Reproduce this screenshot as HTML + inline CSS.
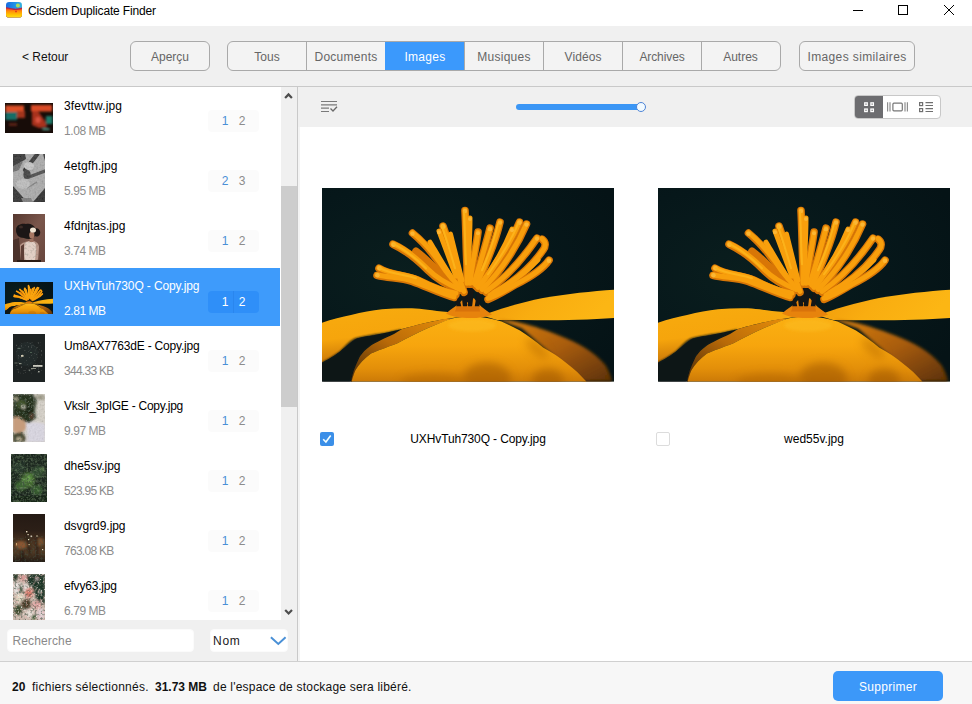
<!DOCTYPE html>
<html lang="fr">
<head>
<meta charset="utf-8">
<title>Cisdem Duplicate Finder</title>
<style>
*{box-sizing:border-box;margin:0;padding:0}
html,body{width:972px;height:704px;overflow:hidden;background:#fff}
body{font-family:"Liberation Sans",sans-serif;font-size:12px;color:#000;position:relative}
.abs{position:absolute}
/* title bar */
#title{left:0;top:0;width:972px;height:26px;background:#fff}
#title .t{left:28px;top:3px;font-size:12px;line-height:16px;color:#000;white-space:nowrap;letter-spacing:-0.15px}
/* toolbar */
#bar{left:0;top:26px;width:972px;height:61px;background:#f0f0f0;border-bottom:1px solid #c9c9c9}
.btn{position:absolute;top:15px;height:30px;border:1px solid #a9a9a9;border-radius:6px;background:#f3f3f3;color:#666;font-size:12px;line-height:30px;text-align:center;white-space:nowrap;overflow:hidden}
#tabs{position:absolute;left:227px;top:15px;width:554px;height:30px;border:1px solid #a9a9a9;border-radius:6px;background:#f3f3f3;overflow:hidden}
#tabs div{position:absolute;top:0;height:28px;line-height:30px;text-align:center;color:#666;font-size:12px;border-left:1px solid #a9a9a9}
#tabs div.first{border-left:none}
#tabs div.on{background:#3b99fc;color:#fff;border-left-color:#3b99fc}
/* left list */
#list{left:0;top:87px;width:281px;height:533px;background:#fff;overflow:hidden}
.row{position:absolute;left:0;width:280px;height:60px}
.row.sel{background:#3e9bfb;height:58px}
.row .n{position:absolute;left:64px;top:11px;font-size:12px;line-height:16px;white-space:nowrap;color:#000}
.row .s{position:absolute;left:64px;top:36px;font-size:12px;line-height:16px;white-space:nowrap;color:#8c8c8c}
.row.sel .n,.row.sel .s{color:#fff}
.row .s.m{letter-spacing:-0.43px}
.row .s.k{letter-spacing:-0.72px}
.bd{position:absolute;left:208px;top:23px;width:51px;height:22px;border-radius:4px;background:#fbfbfb}
.bd i{position:absolute;top:3px;width:12px;text-align:center;font-style:normal;font-size:12px;line-height:16px;color:#8c8c8c}
.bd i.a{left:11px;color:#4a8fd6}
.bd i.b{left:28px}
.row.sel .bd{background:#2f8ff8}
.row.sel .bd i{color:#fff}
.row.sel .bd:after{content:"";position:absolute;left:25px;top:0;width:1px;height:22px;background:#2a86ee}
.th{position:absolute;overflow:hidden}
#sb{left:281px;top:87px;width:16px;height:533px;background:#f0f0f0}
#sb .thumb{position:absolute;left:0;top:99px;width:16px;height:221px;background:#cdcdcd}
#vline{left:297px;top:87px;width:1px;height:575px;background:#c9c9c9}
/* left bottom */
#lb{left:0;top:620px;width:297px;height:42px;background:#f0f0f0}
#search{left:7px;top:629px;width:187px;height:23px;background:#fff;border:1px solid #fbfbfb;border-radius:4px;color:#8a8a8a;font-size:12px;line-height:22px;padding-left:4.500px;letter-spacing:0.13px}
#nom{left:209.500px;top:629px;width:78.500px;height:23px;background:#fff;border:1px solid #fbfbfb;border-radius:4px;color:#1a1a1a;font-size:12px;line-height:22px;padding-left:2.600px;letter-spacing:0.650px}
/* main */
#mtool{left:298px;top:87px;width:674px;height:40px;background:#f0f0f0}
#main{left:298px;top:127px;width:674px;height:535px;background:#fff}
.cap{position:absolute;top:431px;font-size:12px;line-height:16px;white-space:nowrap;color:#000;text-align:center}
/* bottom bar */
#foot{left:0;top:661px;width:972px;height:43px;background:#f7f7f7;border-top:1px solid #d0d0d0}
#foot .tx{position:absolute;left:0;top:17px;font-size:12px;line-height:16px;white-space:nowrap;color:#111}
#foot .tx b,#foot .tx span{position:absolute;top:0;white-space:nowrap}
#del{position:absolute;left:833px;top:9px;width:110px;height:30px;border-radius:5px;background:#3c98f9;color:#fff;font-size:12px;line-height:32.500px;text-align:center;letter-spacing:0.3px;overflow:hidden}
</style>
</head>
<body>
<svg class="abs" width="0" height="0" style="left:0;top:0"><defs>
<filter id="nzW" x="0" y="0" width="100%" height="100%"><feTurbulence type="fractalNoise" baseFrequency="0.600" numOctaves="2" seed="7"/><feColorMatrix type="matrix" values="0 0 0 0 0.92  0 0 0 0 0.90  0 0 0 0 0.84  5 0 0 0 -3.050"/></filter>
<filter id="nzK" x="0" y="0" width="100%" height="100%"><feTurbulence type="fractalNoise" baseFrequency="0.500" numOctaves="2" seed="11"/><feColorMatrix type="matrix" values="0 0 0 0 0.06  0 0 0 0 0.09  0 0 0 0 0.06  0 4 0 0 -1.900"/></filter>
<filter id="nzG" x="0" y="0" width="100%" height="100%"><feTurbulence type="fractalNoise" baseFrequency="0.450" numOctaves="3" seed="4"/><feColorMatrix type="matrix" values="0 0 0 0 0.36  0 0 0 0 0.55  0 0 0 0 0.27  0 0 4 0 -1.900"/></filter>
<filter id="nzL" x="0" y="0" width="100%" height="100%"><feTurbulence type="fractalNoise" baseFrequency="0.700" numOctaves="2" seed="21"/><feColorMatrix type="matrix" values="0 0 0 0 0.55  0 0 0 0 0.75  0 0 0 0 0.42  4 0 0 0 -2.500"/></filter>
<filter id="nzGr" x="0" y="0" width="100%" height="100%"><feTurbulence type="fractalNoise" baseFrequency="0.550" numOctaves="2" seed="5"/><feColorMatrix type="matrix" values="1.400 0 0 0 -0.200  1.400 0 0 0 -0.200  1.400 0 0 0 -0.200  0 0 0 0 0.420"/></filter>
<filter id="nzP" x="0" y="0" width="100%" height="100%"><feTurbulence type="fractalNoise" baseFrequency="0.400" numOctaves="2" seed="9"/><feColorMatrix type="matrix" values="0 0 0 0 0.90  0 0 0 0 0.52  0 0 0 0 0.50  0 4 0 0 -2.100"/></filter>
</defs></svg>
<!-- TITLE BAR -->
<div id="title" class="abs">
  <svg class="abs" style="left:6px;top:2px" width="16" height="16" viewBox="0 0 16 16">
    <defs>
      <linearGradient id="icb" x1="0" y1="0" x2="1" y2="0"><stop offset="0" stop-color="#1769e0"/><stop offset="0.600" stop-color="#2196e8"/><stop offset="1" stop-color="#3bb4dc"/></linearGradient>
      <linearGradient id="ico" x1="0" y1="0" x2="0" y2="1"><stop offset="0" stop-color="#f0452a"/><stop offset="0.250" stop-color="#ff8a0a"/><stop offset="0.650" stop-color="#ffc400"/><stop offset="1" stop-color="#ffe21a"/></linearGradient>
      <clipPath id="icc"><rect x="0" y="0" width="16" height="15.600" rx="3.200"/></clipPath>
    </defs>
    <g clip-path="url(#icc)">
      <rect x="0" y="0" width="16" height="16" fill="url(#icb)"/>
      <circle cx="11.900" cy="3.600" r="2" fill="#a9dc62"/>
      <path d="M0 5.200 C3 5.400 5 6.400 8 6.600 C11 6.800 13 6.200 16 5.600 L16 16 L0 16 Z" fill="#b5264a"/>
      <path d="M0 6.600 C3 6.600 5 7.800 8 8 C11 8.200 13 7.600 16 7 L16 16 L0 16 Z" fill="url(#ico)"/>
      <circle cx="10" cy="9.400" r="0.900" fill="#e0301c"/>
    </g>
  </svg>
  <div class="abs t">Cisdem Duplicate Finder</div>
  <svg class="abs" style="left:840px;top:0" width="132" height="26" viewBox="0 0 132 26">
    <path d="M13 10.5 H23" stroke="#000" stroke-width="1" fill="none"/>
    <rect x="58.500" y="5.500" width="9" height="9" stroke="#000" stroke-width="1" fill="none"/>
    <path d="M104 5 L114 15 M114 5 L104 15" stroke="#000" stroke-width="1" fill="none"/>
  </svg>
</div>

<!-- TOOLBAR -->
<div id="bar" class="abs">
  <div class="abs" style="left:22px;top:23px;font-size:12px;line-height:16px;color:#111;white-space:nowrap">&lt; Retour</div>
  <div class="btn" style="left:130px;width:80px"><span>Aperçu</span></div>
  <div id="tabs">
    <div class="first" style="left:0;width:78px"><span>Tous</span></div>
    <div style="left:78px;width:79px;letter-spacing:0.26px"><span>Documents</span></div>
    <div class="on" style="left:157px;width:79px;letter-spacing:0.27px"><span>Images</span></div>
    <div style="left:236px;width:79px;letter-spacing:0.24px"><span>Musiques</span></div>
    <div style="left:315px;width:79px;letter-spacing:0.08px"><span>Vidéos</span></div>
    <div style="left:394px;width:79px;letter-spacing:-0.1px"><span>Archives</span></div>
    <div style="left:473px;width:79px;padding-right:1px"><span>Autres</span></div>
  </div>
  <div class="btn" style="left:799px;width:116px;letter-spacing:0.38px"><span>Images similaires</span></div>
</div>

<!-- LEFT LIST -->
<div id="list" class="abs">
  <div class="row" style="top:0"><div class="n" style="letter-spacing:0.12px">3fevttw.jpg</div><div class="s m">1.08 MB</div><div class="bd"><i class="a">1</i><i class="b">2</i></div></div>
  <div class="row" style="top:60px"><div class="n" style="letter-spacing:0.09px">4etgfh.jpg</div><div class="s m">5.95 MB</div><div class="bd"><i class="a">2</i><i class="b">3</i></div></div>
  <div class="row" style="top:120px"><div class="n">4fdnjtas.jpg</div><div class="s m">3.74 MB</div><div class="bd"><i class="a">1</i><i class="b">2</i></div></div>
  <div class="row sel" style="top:181px"><div class="n" style="top:10px;letter-spacing:-0.12px">UXHvTuh730Q - Copy.jpg</div><div class="s m" style="top:35px">2.81 MB</div><div class="bd" style="top:23px"><i class="a">1</i><i class="b">2</i></div></div>
  <div class="row" style="top:240px"><div class="n" style="letter-spacing:-0.2px">Um8AX7763dE - Copy.jpg</div><div class="s k">344.33 KB</div><div class="bd"><i class="a">1</i><i class="b">2</i></div></div>
  <div class="row" style="top:300px"><div class="n" style="letter-spacing:-0.25px">Vkslr_3pIGE - Copy.jpg</div><div class="s m">9.97 MB</div><div class="bd"><i class="a">1</i><i class="b">2</i></div></div>
  <div class="row" style="top:360px"><div class="n" style="letter-spacing:-0.08px">dhe5sv.jpg</div><div class="s k">523.95 KB</div><div class="bd"><i class="a">1</i><i class="b">2</i></div></div>
  <div class="row" style="top:420px"><div class="n" style="letter-spacing:-0.05px">dsvgrd9.jpg</div><div class="s k">763.08 KB</div><div class="bd"><i class="a">1</i><i class="b">2</i></div></div>
  <div class="row" style="top:480px"><div class="n" style="letter-spacing:-0.2px">efvy63.jpg</div><div class="s m">6.79 MB</div><div class="bd"><i class="a">1</i><i class="b">2</i></div></div>

  <!-- thumbnails -->
  <svg class="abs" style="left:5px;top:16px" width="48" height="30" viewBox="0 0 48 30">
    <defs><filter id="t1b" x="-20%" y="-20%" width="140%" height="140%"><feGaussianBlur stdDeviation="0.800"/></filter></defs>
    <rect width="48" height="30" fill="#170c08"/>
    <g filter="url(#t1b)">
      <rect x="0.500" y="2.500" width="18.500" height="6.500" fill="#dc4f27"/>
      <rect x="12" y="8" width="8" height="7" fill="#a3341c"/>
      <rect x="26" y="2" width="21" height="6.500" fill="#d94b25"/>
      <rect x="0.500" y="9" width="11.500" height="8" fill="#146d66"/>
      <rect x="41" y="13" width="6.500" height="8" fill="#1b7a6a"/>
      <path d="M27 8 L33 8 L40 18 L42 24 L34 25 L27 22 Z" fill="#a8301f"/>
      <ellipse cx="33" cy="17" rx="2.600" ry="3" fill="#d9533f"/>
      <rect x="4" y="20" width="8" height="3" fill="#5a2414"/>
      <rect x="37.500" y="25.600" width="7" height="1.400" fill="#63c9b5"/>
    </g>
  </svg>
  <svg class="abs" style="left:13px;top:67px" width="32" height="48" viewBox="0 0 32 48">
    <defs><filter id="t2b" x="-20%" y="-20%" width="140%" height="140%"><feGaussianBlur stdDeviation="0.700"/></filter></defs>
    <rect width="32" height="48" fill="#a9a9a9"/>
    <g filter="url(#t2b)">
      <path d="M0 0 L12 0 L13 5 L0 13 Z" fill="#303030"/>
      <path d="M0 12 L10 7 L6 16 L0 18 Z" fill="#6a6a6a"/>
      <path d="M30 0 L32 0 L32 7 Z" fill="#3a3a3a"/>
      <path d="M24.500 0 L12 16" stroke="#343434" stroke-width="4.200" stroke-linecap="round"/>
      <path d="M32 17 L16 23" stroke="#484848" stroke-width="3.400" stroke-linecap="round"/>
      <ellipse cx="14" cy="20.500" rx="3.600" ry="4.500" fill="#3c3c3c"/>
      <path d="M0 32 L8 41 L14 48 L0 48 Z" fill="#2e2e2e"/>
      <path d="M32 34 L20 48 L32 48 Z" fill="#2c2c2c"/>
      <path d="M8 44 L18 44 L20 48 L10 48 Z" fill="#7a7a7a"/>
      <path d="M14 34 L24 28" stroke="#7d7d7d" stroke-width="1.200"/>
      <ellipse cx="16" cy="12" rx="5" ry="4" fill="#c4c4c4"/>
      <ellipse cx="10" cy="30" rx="7" ry="5" fill="#bcbcbc"/>
    </g>
    <rect width="32" height="48" filter="url(#nzGr)" opacity="0.300"/>
  </svg>
  <svg class="abs" style="left:13px;top:127px" width="32" height="48" viewBox="0 0 32 48">
    <defs><filter id="t3b" x="-20%" y="-20%" width="140%" height="140%"><feGaussianBlur stdDeviation="0.650"/></filter>
    <linearGradient id="t3g" x1="0" y1="0" x2="1" y2="1"><stop offset="0" stop-color="#563830"/><stop offset="0.500" stop-color="#7a564b"/><stop offset="1" stop-color="#68463d"/></linearGradient></defs>
    <rect width="32" height="48" fill="url(#t3g)"/>
    <g filter="url(#t3b)">
      <path d="M0 26 L6 24 L8 48 L0 48 Z" fill="#4c312a"/>
      <path d="M7 31 C10 28 14 27 17 27 L21 27 C24 28 26 30 26 33 L25 47 L8 47 Z" fill="#b9978a"/>
      <path d="M12 29 C15 27 19 27 22 29 C24 33 23 40 22 46 L12 46 C11 40 11 34 12 29 Z" fill="#e2cfc5"/>
      <path d="M8 32 L11 30 L11 46 L8 46 Z" fill="#5d3d34"/>
      <rect x="16.500" y="22" width="4" height="6" fill="#9b6f5e"/>
      <path d="M3 16 C3 11 8 9 13 10 C17 9 21 11 22 14 C26 14 28 17 27 20 C26 23 23 23 22 22 C20 25 15 26 11 24 C6 24 3 21 3 16 Z" fill="#1c1614"/>
      <ellipse cx="18.800" cy="21" rx="2.600" ry="3.600" fill="#a77764"/>
      <ellipse cx="20" cy="16" rx="3" ry="2.600" fill="#efe3d2"/>
      <ellipse cx="8" cy="13" rx="2" ry="1.500" fill="#3a2a25"/>
      <rect x="4" y="46" width="24" height="2" fill="#2a1c18"/>
    </g>
    <rect x="10" y="28" width="15" height="18" filter="url(#nzK)" opacity="0.180"/>
  </svg>
<svg class="abs" style="left:5px;top:195px" width="48" height="32" viewBox="0 0 292 193" preserveAspectRatio="none">
<defs>
<radialGradient id="bgt" cx="0.3" cy="0.45" r="0.8"><stop offset="0" stop-color="#0a1e1e"/><stop offset="0.6" stop-color="#06171a"/><stop offset="1" stop-color="#051316"/></radialGradient>
<linearGradient id="plt" x1="0" y1="0" x2="0.25" y2="1"><stop offset="0" stop-color="#f8ab0e"/><stop offset="0.55" stop-color="#f6a50c"/><stop offset="1" stop-color="#c67308"/></linearGradient>
<linearGradient id="prt" x1="0" y1="0" x2="1" y2="0.2"><stop offset="0" stop-color="#f09a0b"/><stop offset="0.5" stop-color="#f9ad10"/><stop offset="1" stop-color="#fcb614"/></linearGradient>
<linearGradient id="pft" x1="0" y1="0" x2="0" y2="1"><stop offset="0" stop-color="#fbb012"/><stop offset="0.45" stop-color="#f7a50d"/><stop offset="0.8" stop-color="#e38f09"/><stop offset="1" stop-color="#cc7a07"/></linearGradient>
<linearGradient id="pbt" x1="0" y1="0" x2="1" y2="1"><stop offset="0" stop-color="#d9800a"/><stop offset="0.5" stop-color="#a85c08"/><stop offset="1" stop-color="#5a3006"/></linearGradient>
<linearGradient id="pkt" x1="1" y1="0" x2="0" y2="1"><stop offset="0" stop-color="#e58d0a"/><stop offset="0.5" stop-color="#b96a08"/><stop offset="1" stop-color="#4a2a08"/></linearGradient>
<filter id="blt" x="-10%" y="-10%" width="120%" height="120%"><feGaussianBlur stdDeviation="1.6"/></filter>
<filter id="bwt" x="-10%" y="-10%" width="120%" height="120%"><feGaussianBlur stdDeviation="0.9"/></filter>
<filter id="bst" x="-10%" y="-10%" width="120%" height="120%"><feGaussianBlur stdDeviation="4"/></filter>
</defs>
<rect width="292" height="193" fill="url(#bgt)"/>
<!-- right top petal -->
<path d="M160 127 C175 121 200 114 221 109.700 C245 105.500 270 103 292 101.500 L292 129.500 C260 132 220 132 175 131.500 Z" fill="url(#prt)"/>
<!-- right back petal -->
<path d="M176 131 C190 132 206 135 236 146.500 C256 154 272 163 283 176 C287 182 289 188 290 193 L262 193 L200 140 Z" fill="url(#pbt)" filter="url(#blt)"/>
<!-- left petal -->
<path d="M0 134.400 C10 131 20 128.500 29 126.700 C40 124 50 122 60 121 C70 120 80 119.800 90 120 C100 120.500 110 122.500 126 123.600 L140 128 L121 131 C112 132.500 106 133.600 80 140.500 C70 143 60 145 50 147 C42 148 36 149 33 151 C26 156 20 161 18 163 C10 169 4 172 0 174 Z" fill="url(#plt)"/>
<!-- dark shadow wedge -->
<path d="M0 174 C6 171 12 167 18 163 C24 157 28 152 33.500 149.800 C42 147.500 52 146 60 145 C68 143.500 74 142 80 140.500 L72 145.500 C62 150 54 154 49 157 C42 162 38 167 36.500 171 C33 178 30 186 29 193 L0 193 Z" fill="#0f1713" filter="url(#bwt)"/>
<!-- back left strip -->
<path d="M80 140.500 C92 137 106 133.600 122 130.500 L130 130 C120 134 112 137 106 139.500 C94 145 84 150 75 155 C64 159 56 162 49 165 C42 170 37 176 33.500 181.500 L30 193 L29 193 C30 186 33 178 36.500 171 C38 167 42 162 49 157 C54 154 62 150 72 145.500 Z" fill="url(#pkt)"/>
<!-- front petal -->
<path d="M29.600 193 C31 188 32 185 33.500 181.500 C37 176 42 170 49 165 C56 162 64 159 75 155 C84 150 94 145 106 139.500 C114 136 122 132.500 130 130 C138 128.500 146 128 152 128.200 C160 128.500 170 130.500 179.500 133 C186 136 192 139 198 142 C206 147 214 153 221 159 C230 164 238 169 244.300 174.500 C252 180 259 187 264.400 193 Z" fill="url(#pft)"/>
<!-- folds on front petal -->
<g filter="url(#bst)" opacity="0.22">
<ellipse cx="165" cy="190" rx="24" ry="16" fill="#9a5205"/>
<ellipse cx="226" cy="192" rx="16" ry="12" fill="#9a5205"/>
<ellipse cx="112" cy="194" rx="34" ry="9" fill="#b06406"/>
<ellipse cx="215" cy="160" rx="6" ry="14" transform="rotate(-50 215 160)" fill="#b86a06"/>
</g>
<ellipse cx="150" cy="137" rx="24" ry="6" fill="#fcbd20" opacity="0.55" filter="url(#blt)"/>
<!-- stamen base -->
<path d="M124 125 C130 120 136 117 140 112 L152 110 C156 116 162 121 170 126 C160 131 134 131 124 125 Z" fill="#e7830c"/>
<path d="M132 98 L137 118 M141 100 L143 117 M150 100 L148 117 M158 100 L155 118 M146 96 L146 112" stroke="#141616" stroke-width="4.500" stroke-linecap="round" fill="none"/>
<path d="M135 118 L157 118 L158 123 L133 123 Z" fill="#d9730a"/>
<!-- stamens dark layer -->
<g fill="none" stroke="#d87606" stroke-width="10.500" stroke-linecap="round" stroke-linejoin="round">
<path d="M57 80 C70 88 84 86 96 92 C108 98 122 104 134 106"/>
<path d="M55 87 C66 90 78 89 90 93 C104 98 118 105 132 109"/>
<path d="M71 56 C84 62 96 72 106 82 C116 92 128 98 138 102"/>
<path d="M90.500 45 C104 56 116 72 124 84 C130 92 136 98 140 102"/>
<path d="M94 63 C106 72 116 84 126 92"/>
<path d="M121 38 C126 52 132 70 136 84 C138 92 140 98 142 104"/>
<path d="M143 22.500 C144 40 144 60 145 78 L145 96"/>
<path d="M156 44 C154 60 150 76 148 96"/>
<path d="M168 40 C164 56 158 76 152 96"/>
<path d="M178 34 C174 52 164 76 154 98"/>
<path d="M197.500 34 C190 52 174 78 156 100"/>
<path d="M204.500 36 C196 56 180 82 160 102"/>
<path d="M215 50 C204 66 186 88 164 104"/>
<path d="M220 51 C224 54 224 58 221 62 C210 78 192 94 168 108"/>
<path d="M227 72 C220 82 206 90 194 96 C184 102 174 108 166 111"/>
</g>
<!-- stamens bright layer -->
<g fill="none" stroke="#f9a30e" stroke-width="7.500" stroke-linecap="round" stroke-linejoin="round">
<path d="M57 79.500 C70 87 84 85 96 91 C108 97 122 103 134 105"/>
<path d="M55 86.500 C66 89.500 78 88.500 90 92.500 C104 97.500 118 104.500 132 108.500"/>
<path d="M71 55.500 C84 61 96 71 106 81 C116 91 128 97 138 101"/>
<path d="M90.500 44.500 C104 55 116 71 124 83 C130 91 136 97 140 101"/>
<path d="M108 54 C114 64 122 78 130 90"/>
<path d="M117 43 C122 56 128 72 134 88"/>
<path d="M121 37.500 C126 52 132 70 136 84 C138 92 140 98 142 103"/>
<path d="M128.500 46 C132 60 136 76 140 92"/>
<path d="M143 22 C144 40 144 60 145 78 L145 95"/>
<path d="M148 30 C148 46 147 64 146 84"/>
<path d="M156 44 C154 60 150 76 148 95"/>
<path d="M168 40 C164 56 158 76 152 95"/>
<path d="M178 33.500 C174 52 164 76 154 97"/>
<path d="M190 41 C184 56 172 78 158 98"/>
<path d="M197.500 33.500 C190 52 174 78 156 99"/>
<path d="M204.500 35.500 C196 56 180 82 160 101"/>
<path d="M215 49.500 C204 66 186 88 164 103"/>
<path d="M220 50.500 C224 54 224 58 221 62 C210 78 192 94 168 107"/>
<path d="M216 71.500 C206 82 190 94 172 104"/>
<path d="M227 71.500 C220 82 206 90 194 96 C184 102 174 108 166 110"/>
</g>
<!-- tips -->
<g fill="#fbb634">
<circle cx="143" cy="23" r="2.200"/><circle cx="148" cy="31" r="2"/><circle cx="121" cy="38.500" r="2.500"/><circle cx="117" cy="44" r="2"/><circle cx="90.500" cy="45.500" r="2.200"/><circle cx="71.500" cy="56.500" r="2.300"/><circle cx="57.500" cy="80" r="2.300"/><circle cx="55.500" cy="87" r="2.200"/><circle cx="168" cy="41" r="2.200"/><circle cx="178" cy="34.500" r="2.200"/><circle cx="197.500" cy="34.500" r="2.300"/><circle cx="204.500" cy="36.500" r="2.200"/><circle cx="215" cy="50.500" r="2.100"/><circle cx="227" cy="72.500" r="2.300"/><circle cx="156" cy="45" r="2"/><circle cx="190" cy="42" r="2"/>
</g>
<!-- highlights -->
<g fill="none" stroke="#fdb51c" stroke-width="2" stroke-linecap="round" opacity="0.9">
<path d="M120 38 C124 50 129 66 133 80"/>
<path d="M142 24 C143 40 143 58 144 76"/>
<path d="M196 36 C190 50 178 70 166 86"/>
<path d="M176 36 C172 52 166 68 160 82"/>
<path d="M72 56 C84 62 94 70 104 80"/>
<path d="M58 80 C70 86 82 86 94 90"/>
</g>
</svg>

  <svg class="abs" style="left:13px;top:247px" width="32" height="48" viewBox="0 0 32 48">
    <defs><filter id="t5b" x="-20%" y="-20%" width="140%" height="140%"><feGaussianBlur stdDeviation="0.500"/></filter></defs>
    <rect width="32" height="48" fill="#1e2323"/>
    <g filter="url(#t5b)">
      <ellipse cx="14" cy="20" rx="11" ry="12" fill="#242c2b"/>
      <rect x="20" y="31" width="9.500" height="1.800" fill="#c9c9bd"/>
      <rect x="18" y="34" width="5" height="1" fill="#8d9084"/>
      <rect x="8" y="21" width="2.500" height="1.800" fill="#d0c9b2"/>
      <rect x="6" y="29" width="2.500" height="1.200" fill="#8e9288"/>
      <rect x="1.500" y="28.500" width="3" height="1" fill="#60675f"/>
      <rect x="4.500" y="14" width="3" height="1" fill="#5b6a60"/>
      <rect x="17" y="18" width="2" height="1" fill="#4d6052"/>
      <rect x="25" y="37" width="1.600" height="1.400" fill="#a2a59b"/>
      <rect x="16" y="35.500" width="1.200" height="1.600" fill="#6d756c"/>
    </g>
    <rect x="3" y="8" width="26" height="32" filter="url(#nzW)" opacity="0.220"/>
  </svg>
  <svg class="abs" style="left:13px;top:307px" width="32" height="48" viewBox="0 0 32 48">
    <defs><filter id="t6b" x="-20%" y="-20%" width="140%" height="140%"><feGaussianBlur stdDeviation="0.900"/></filter></defs>
    <rect width="32" height="48" fill="#d4cfc6"/>
    <g filter="url(#t6b)">
      <path d="M0 0 L20 0 L24 6 L22 16 L23 24 L16 29 L8 26 L0 24 Z" fill="#27331d"/>
      <ellipse cx="8" cy="10" rx="5" ry="4" fill="#42542f"/>
      <ellipse cx="16" cy="16" rx="4" ry="5" fill="#1d2717"/>
      <ellipse cx="3" cy="5" rx="2.200" ry="2.200" fill="#a9a48b"/>
      <ellipse cx="10.500" cy="13" rx="1.800" ry="1.800" fill="#e2decd"/>
      <path d="M20 2 L30 0 L32 6 L26 6 Z" fill="#9d9a86"/>
      <path d="M0 24 C4 21 10 24 13 30 C14 34 12 38 6 39 L0 38 Z" fill="#c69c7c"/>
      <path d="M13 30 C18 28 26 28 32 30 L32 48 L14 48 C15 42 14 36 13 30 Z" fill="#d9d6e1"/>
      <path d="M0 40 L9 38 L13 44 L11 48 L0 48 Z" fill="#4c4a33"/>
      <ellipse cx="6" cy="45" rx="3" ry="2" fill="#b7ae93"/>
      <ellipse cx="18.500" cy="22" rx="2" ry="3" fill="#5b3d2e"/>
    </g>
    <clipPath id="t6c"><path d="M0 0 L20 0 L24 6 L22 16 L23 24 L16 29 L8 26 L0 24 Z"/></clipPath>
    <g clip-path="url(#t6c)"><rect width="32" height="30" filter="url(#nzK)" opacity="0.900"/><rect width="32" height="30" filter="url(#nzW)" opacity="0.380"/></g>
    <rect x="20" y="0" width="12" height="28" filter="url(#nzGr)" opacity="0.350"/>
    <rect x="0" y="38" width="12" height="10" filter="url(#nzK)" opacity="0.500"/>
    <rect x="13" y="30" width="19" height="18" filter="url(#nzGr)" opacity="0.220"/>
  </svg>
  <svg class="abs" style="left:11px;top:367px" width="36" height="48" viewBox="0 0 36 48">
    <defs><filter id="t7b" x="-20%" y="-20%" width="140%" height="140%"><feGaussianBlur stdDeviation="1.100"/></filter></defs>
    <rect width="36" height="48" fill="#1b261e"/>
    <g filter="url(#t7b)">
      <ellipse cx="17" cy="26" rx="7" ry="8" fill="#42692f"/>
      <ellipse cx="10" cy="32" rx="6" ry="5" fill="#3d6530"/>
      <ellipse cx="27" cy="18" rx="6" ry="6" fill="#2f4a2d"/>
      <ellipse cx="26" cy="36" rx="6" ry="5" fill="#355a2f"/>
      <ellipse cx="8" cy="14" rx="6" ry="6" fill="#253829"/>
      <ellipse cx="18" cy="24" rx="2.400" ry="3.400" fill="#649a4a"/>
      <ellipse cx="32" cy="15" rx="1.500" ry="1.500" fill="#7aa064"/>
      <ellipse cx="13" cy="26" rx="1.600" ry="1.600" fill="#6a9a52"/>
      <rect x="0" y="42" width="36" height="6" fill="#162019"/>
    </g>
    <rect width="36" height="48" filter="url(#nzG)" opacity="0.320"/>
    <rect width="36" height="48" filter="url(#nzK)" opacity="0.700"/>
    <rect x="8" y="14" width="22" height="26" filter="url(#nzL)" opacity="0.300"/>
  </svg>
  <svg class="abs" style="left:13px;top:427px" width="32" height="48" viewBox="0 0 32 48">
    <defs><filter id="t8b" x="-20%" y="-20%" width="140%" height="140%"><feGaussianBlur stdDeviation="1"/></filter>
    <linearGradient id="t8g" x1="0" y1="0" x2="0" y2="1"><stop offset="0" stop-color="#241a14"/><stop offset="0.350" stop-color="#2c1f17"/><stop offset="0.600" stop-color="#4a3320"/><stop offset="0.800" stop-color="#4f3924"/><stop offset="1" stop-color="#241c15"/></linearGradient></defs>
    <rect width="32" height="48" fill="url(#t8g)"/>
    <g filter="url(#t8b)">
      <ellipse cx="8" cy="31" rx="6" ry="4" fill="#8a5632"/>
      <ellipse cx="27" cy="28" rx="4" ry="4" fill="#7a4f2f"/>
      <path d="M13 17 L17 40" stroke="#2c2017" stroke-width="2"/>
      <path d="M24 22 L24 44" stroke="#2d2219" stroke-width="2"/>
      <path d="M9 36 L10 48" stroke="#241a14" stroke-width="2.400"/>
    </g>
    <rect x="0" y="22" width="32" height="26" filter="url(#nzK)" opacity="0.450"/>
    <g fill="#e9dcc0"><rect x="13" y="17" width="1.400" height="1.400"/><rect x="14.500" y="20" width="1.200" height="1.200"/><rect x="17.500" y="21.500" width="1.600" height="1.600" fill="#c9bfae"/><rect x="15" y="25" width="1.200" height="1.200"/><rect x="15.500" y="30" width="1.200" height="1.200" fill="#d8c39a"/><rect x="29" y="35" width="1.200" height="1.200"/><rect x="3" y="29" width="1" height="2.400" fill="#c9a56e"/><rect x="23.500" y="21" width="1" height="2" fill="#b5a58a"/></g>
  </svg>
  <svg class="abs" style="left:13px;top:487px" width="32" height="48" viewBox="0 0 32 48">
    <defs><filter id="t9b" x="-20%" y="-20%" width="140%" height="140%"><feGaussianBlur stdDeviation="0.900"/></filter></defs>
    <rect width="32" height="48" fill="#c9b7ab"/>
    <g filter="url(#t9b)">
      <path d="M14 0 L32 0 L32 30 L24 26 L20 14 L14 8 Z" fill="#1d3426"/>
      <path d="M0 0 L6 0 L4 6 L0 8 Z" fill="#2a3a29"/>
      <ellipse cx="4" cy="14" rx="4.500" ry="6" fill="#e5dedb"/>
      <ellipse cx="10" cy="4" rx="3.500" ry="3" fill="#dc9a97"/>
      <ellipse cx="12" cy="13" rx="3" ry="3" fill="#e9e1de"/>
      <ellipse cx="16" cy="19" rx="4" ry="5" fill="#d77e70"/>
      <ellipse cx="8" cy="15" rx="1.800" ry="4" fill="#2f4a2a"/>
      <ellipse cx="7" cy="24" rx="4" ry="4" fill="#e6dcc6"/>
      <ellipse cx="13" cy="30" rx="5" ry="5" fill="#4a3a25"/>
      <ellipse cx="24" cy="31" rx="5" ry="4" fill="#dba29f"/>
      <ellipse cx="5" cy="36" rx="4" ry="5" fill="#3a4a2b"/>
      <ellipse cx="28" cy="40" rx="4" ry="6" fill="#e3cfd3"/>
      <ellipse cx="17" cy="40" rx="4" ry="4" fill="#e8e0d8"/>
      <ellipse cx="21" cy="43" rx="2.500" ry="2.500" fill="#3b5a2e"/>
      <ellipse cx="24" cy="5" rx="1.500" ry="1.500" fill="#d7c5c5"/>
      <ellipse cx="27" cy="18" rx="1.200" ry="1.200" fill="#c3d0c3"/>
    </g>
    <rect width="32" height="48" filter="url(#nzP)" opacity="0.550"/>
    <rect width="32" height="48" filter="url(#nzK)" opacity="0.600"/>
    <rect width="32" height="48" filter="url(#nzW)" opacity="0.800"/>
  </svg>
</div>
<div id="sb" class="abs">
  <div class="thumb"></div>
  <svg class="abs" style="left:0;top:0" width="16" height="533" viewBox="0 0 16 533">
    <path d="M4.100 11 L7.500 7.400 L10.900 11" stroke="#4d4d4d" stroke-width="2.200" fill="none"/>
    <path d="M4.200 523 L7.600 526.500 L11 523" stroke="#4d4d4d" stroke-width="2.200" fill="none"/>
  </svg>
</div>
<div id="lb" class="abs"></div>
<div id="search" class="abs">Recherche</div>
<div id="nom" class="abs">Nom
  <svg class="abs" style="left:59px;top:6px" width="18" height="12" viewBox="0 0 18 12"><path d="M0.900 1.300 L8.300 7.900 L15.600 1.300" stroke="#4a90d6" stroke-width="2" fill="none"/></svg>
</div>
<div id="vline" class="abs"></div>

<!-- MAIN -->
<div id="mtool" class="abs"></div>
<div id="main" class="abs"></div>
<div class="abs" style="left:298px;top:127px;width:2px;height:534px;background:#f4f4f4"></div>
<!-- select-all icon -->
<svg class="abs" style="left:320px;top:100px" width="18" height="13" viewBox="0 0 18 13">
  <path d="M1 1.500 H17 M1 4.800 H17 M1 8.200 H9 M1 11.500 H9" stroke="#7a7a7a" stroke-width="1.200" fill="none"/>
  <path d="M10.500 8.500 L13 11 L17 6.800" stroke="#6a6a6a" stroke-width="1.300" fill="none"/>
</svg>
<!-- slider -->
<div class="abs" style="left:516px;top:103.500px;width:124px;height:6.500px;border-radius:3.250px;background:#3b96f5"></div>
<div class="abs" style="left:636.300px;top:102.200px;width:9.600px;height:9.600px;border-radius:5px;background:#f2faff;border:1.500px solid #4d84d6"></div>
<!-- view toggle -->
<div class="abs" style="left:854px;top:95px;width:87px;height:24px;border:1px solid #c8c8c8;border-radius:4px;background:#fff;overflow:hidden">
  <div class="abs" style="left:-1px;top:-1px;width:29px;height:24px;background:#6d6d70"></div>
  <svg class="abs" style="left:-1px;top:-1px" width="87" height="24" viewBox="0 0 87 24">
    <g fill="none" stroke="#fff" stroke-width="1.300"><rect x="10.750" y="7.850" width="2.500" height="2.500"/><rect x="16.900" y="7.850" width="2.500" height="2.500"/><rect x="10.750" y="14.050" width="2.500" height="2.500"/><rect x="16.900" y="14.050" width="2.500" height="2.500"/></g>
    <g fill="none" stroke="#8e8e8e" stroke-width="1.200"><path d="M33.600 7.300 V16.600 M36 7.300 V16.600 M51 7.300 V16.600 M53.400 7.300 V16.600"/><rect x="38.900" y="8.200" width="9.400" height="7.600" rx="1" stroke="#777"/></g>
    <g fill="none" stroke="#6f6f6f" stroke-width="1.200"><rect x="65.600" y="7.600" width="3" height="3"/><rect x="65.600" y="13.600" width="3" height="3"/><path d="M71.500 7.600 H79 M71.500 10.500 H79 M71.500 13.600 H79 M71.500 16.500 H79"/></g>
  </svg>
</div>
<!-- big images -->
<svg class="abs" style="left:322px;top:188px" width="292" height="193.6" viewBox="0 0 292 193" preserveAspectRatio="none">
<defs>
<radialGradient id="bga" cx="0.3" cy="0.45" r="0.8"><stop offset="0" stop-color="#0a1e1e"/><stop offset="0.6" stop-color="#06171a"/><stop offset="1" stop-color="#051316"/></radialGradient>
<linearGradient id="pla" x1="0" y1="0" x2="0.25" y2="1"><stop offset="0" stop-color="#f8ab0e"/><stop offset="0.55" stop-color="#f6a50c"/><stop offset="1" stop-color="#c67308"/></linearGradient>
<linearGradient id="pra" x1="0" y1="0" x2="1" y2="0.2"><stop offset="0" stop-color="#f09a0b"/><stop offset="0.5" stop-color="#f9ad10"/><stop offset="1" stop-color="#fcb614"/></linearGradient>
<linearGradient id="pfa" x1="0" y1="0" x2="0" y2="1"><stop offset="0" stop-color="#fbb012"/><stop offset="0.45" stop-color="#f7a50d"/><stop offset="0.8" stop-color="#e38f09"/><stop offset="1" stop-color="#cc7a07"/></linearGradient>
<linearGradient id="pba" x1="0" y1="0" x2="1" y2="1"><stop offset="0" stop-color="#d9800a"/><stop offset="0.5" stop-color="#a85c08"/><stop offset="1" stop-color="#5a3006"/></linearGradient>
<linearGradient id="pka" x1="1" y1="0" x2="0" y2="1"><stop offset="0" stop-color="#e58d0a"/><stop offset="0.5" stop-color="#b96a08"/><stop offset="1" stop-color="#4a2a08"/></linearGradient>
<filter id="bla" x="-10%" y="-10%" width="120%" height="120%"><feGaussianBlur stdDeviation="1.6"/></filter>
<filter id="bwa" x="-10%" y="-10%" width="120%" height="120%"><feGaussianBlur stdDeviation="0.9"/></filter>
<filter id="bsa" x="-10%" y="-10%" width="120%" height="120%"><feGaussianBlur stdDeviation="4"/></filter>
</defs>
<rect width="292" height="193" fill="url(#bga)"/>
<!-- right top petal -->
<path d="M160 127 C175 121 200 114 221 109.700 C245 105.500 270 103 292 101.500 L292 129.500 C260 132 220 132 175 131.500 Z" fill="url(#pra)"/>
<!-- right back petal -->
<path d="M176 131 C190 132 206 135 236 146.500 C256 154 272 163 283 176 C287 182 289 188 290 193 L262 193 L200 140 Z" fill="url(#pba)" filter="url(#bla)"/>
<!-- left petal -->
<path d="M0 134.400 C10 131 20 128.500 29 126.700 C40 124 50 122 60 121 C70 120 80 119.800 90 120 C100 120.500 110 122.500 126 123.600 L140 128 L121 131 C112 132.500 106 133.600 80 140.500 C70 143 60 145 50 147 C42 148 36 149 33 151 C26 156 20 161 18 163 C10 169 4 172 0 174 Z" fill="url(#pla)"/>
<!-- dark shadow wedge -->
<path d="M0 174 C6 171 12 167 18 163 C24 157 28 152 33.500 149.800 C42 147.500 52 146 60 145 C68 143.500 74 142 80 140.500 L72 145.500 C62 150 54 154 49 157 C42 162 38 167 36.500 171 C33 178 30 186 29 193 L0 193 Z" fill="#0f1713" filter="url(#bwa)"/>
<!-- back left strip -->
<path d="M80 140.500 C92 137 106 133.600 122 130.500 L130 130 C120 134 112 137 106 139.500 C94 145 84 150 75 155 C64 159 56 162 49 165 C42 170 37 176 33.500 181.500 L30 193 L29 193 C30 186 33 178 36.500 171 C38 167 42 162 49 157 C54 154 62 150 72 145.500 Z" fill="url(#pka)"/>
<!-- front petal -->
<path d="M29.600 193 C31 188 32 185 33.500 181.500 C37 176 42 170 49 165 C56 162 64 159 75 155 C84 150 94 145 106 139.500 C114 136 122 132.500 130 130 C138 128.500 146 128 152 128.200 C160 128.500 170 130.500 179.500 133 C186 136 192 139 198 142 C206 147 214 153 221 159 C230 164 238 169 244.300 174.500 C252 180 259 187 264.400 193 Z" fill="url(#pfa)"/>
<!-- folds on front petal -->
<g filter="url(#bsa)" opacity="0.5">
<ellipse cx="165" cy="190" rx="24" ry="16" fill="#9a5205"/>
<ellipse cx="226" cy="192" rx="16" ry="12" fill="#9a5205"/>
<ellipse cx="112" cy="194" rx="34" ry="9" fill="#b06406"/>
<ellipse cx="215" cy="160" rx="6" ry="14" transform="rotate(-50 215 160)" fill="#b86a06"/>
</g>
<ellipse cx="150" cy="137" rx="24" ry="6" fill="#fcbd20" opacity="0.55" filter="url(#bla)"/>
<!-- stamen base -->
<path d="M124 125 C130 120 136 117 140 112 L152 110 C156 116 162 121 170 126 C160 131 134 131 124 125 Z" fill="#e7830c"/>
<path d="M132 98 L137 118 M141 100 L143 117 M150 100 L148 117 M158 100 L155 118 M146 96 L146 112" stroke="#141616" stroke-width="4.500" stroke-linecap="round" fill="none"/>
<path d="M135 118 L157 118 L158 123 L133 123 Z" fill="#d9730a"/>
<!-- stamens dark layer -->
<g fill="none" stroke="#d87606" stroke-width="7.600" stroke-linecap="round" stroke-linejoin="round">
<path d="M57 80 C70 88 84 86 96 92 C108 98 122 104 134 106"/>
<path d="M55 87 C66 90 78 89 90 93 C104 98 118 105 132 109"/>
<path d="M71 56 C84 62 96 72 106 82 C116 92 128 98 138 102"/>
<path d="M90.500 45 C104 56 116 72 124 84 C130 92 136 98 140 102"/>
<path d="M94 63 C106 72 116 84 126 92"/>
<path d="M121 38 C126 52 132 70 136 84 C138 92 140 98 142 104"/>
<path d="M143 22.500 C144 40 144 60 145 78 L145 96"/>
<path d="M156 44 C154 60 150 76 148 96"/>
<path d="M168 40 C164 56 158 76 152 96"/>
<path d="M178 34 C174 52 164 76 154 98"/>
<path d="M197.500 34 C190 52 174 78 156 100"/>
<path d="M204.500 36 C196 56 180 82 160 102"/>
<path d="M215 50 C204 66 186 88 164 104"/>
<path d="M220 51 C224 54 224 58 221 62 C210 78 192 94 168 108"/>
<path d="M227 72 C220 82 206 90 194 96 C184 102 174 108 166 111"/>
</g>
<!-- stamens bright layer -->
<g fill="none" stroke="#f89f0c" stroke-width="5" stroke-linecap="round" stroke-linejoin="round">
<path d="M57 79.500 C70 87 84 85 96 91 C108 97 122 103 134 105"/>
<path d="M55 86.500 C66 89.500 78 88.500 90 92.500 C104 97.500 118 104.500 132 108.500"/>
<path d="M71 55.500 C84 61 96 71 106 81 C116 91 128 97 138 101"/>
<path d="M90.500 44.500 C104 55 116 71 124 83 C130 91 136 97 140 101"/>
<path d="M108 54 C114 64 122 78 130 90"/>
<path d="M117 43 C122 56 128 72 134 88"/>
<path d="M121 37.500 C126 52 132 70 136 84 C138 92 140 98 142 103"/>
<path d="M128.500 46 C132 60 136 76 140 92"/>
<path d="M143 22 C144 40 144 60 145 78 L145 95"/>
<path d="M148 30 C148 46 147 64 146 84"/>
<path d="M156 44 C154 60 150 76 148 95"/>
<path d="M168 40 C164 56 158 76 152 95"/>
<path d="M178 33.500 C174 52 164 76 154 97"/>
<path d="M190 41 C184 56 172 78 158 98"/>
<path d="M197.500 33.500 C190 52 174 78 156 99"/>
<path d="M204.500 35.500 C196 56 180 82 160 101"/>
<path d="M215 49.500 C204 66 186 88 164 103"/>
<path d="M220 50.500 C224 54 224 58 221 62 C210 78 192 94 168 107"/>
<path d="M216 71.500 C206 82 190 94 172 104"/>
<path d="M227 71.500 C220 82 206 90 194 96 C184 102 174 108 166 110"/>
</g>
<!-- tips -->
<g fill="#fbb634">
<circle cx="143" cy="23" r="2.200"/><circle cx="148" cy="31" r="2"/><circle cx="121" cy="38.500" r="2.500"/><circle cx="117" cy="44" r="2"/><circle cx="90.500" cy="45.500" r="2.200"/><circle cx="71.500" cy="56.500" r="2.300"/><circle cx="57.500" cy="80" r="2.300"/><circle cx="55.500" cy="87" r="2.200"/><circle cx="168" cy="41" r="2.200"/><circle cx="178" cy="34.500" r="2.200"/><circle cx="197.500" cy="34.500" r="2.300"/><circle cx="204.500" cy="36.500" r="2.200"/><circle cx="215" cy="50.500" r="2.100"/><circle cx="227" cy="72.500" r="2.300"/><circle cx="156" cy="45" r="2"/><circle cx="190" cy="42" r="2"/>
</g>
<!-- highlights -->
<g fill="none" stroke="#fdb51c" stroke-width="2" stroke-linecap="round" opacity="0.9">
<path d="M120 38 C124 50 129 66 133 80"/>
<path d="M142 24 C143 40 143 58 144 76"/>
<path d="M196 36 C190 50 178 70 166 86"/>
<path d="M176 36 C172 52 166 68 160 82"/>
<path d="M72 56 C84 62 94 70 104 80"/>
<path d="M58 80 C70 86 82 86 94 90"/>
</g>
</svg>

<svg class="abs" style="left:658px;top:188px" width="292" height="193.6" viewBox="0 0 292 193" preserveAspectRatio="none">
<defs>
<radialGradient id="bgb" cx="0.3" cy="0.45" r="0.8"><stop offset="0" stop-color="#0a1e1e"/><stop offset="0.6" stop-color="#06171a"/><stop offset="1" stop-color="#051316"/></radialGradient>
<linearGradient id="plb" x1="0" y1="0" x2="0.25" y2="1"><stop offset="0" stop-color="#f8ab0e"/><stop offset="0.55" stop-color="#f6a50c"/><stop offset="1" stop-color="#c67308"/></linearGradient>
<linearGradient id="prb" x1="0" y1="0" x2="1" y2="0.2"><stop offset="0" stop-color="#f09a0b"/><stop offset="0.5" stop-color="#f9ad10"/><stop offset="1" stop-color="#fcb614"/></linearGradient>
<linearGradient id="pfb" x1="0" y1="0" x2="0" y2="1"><stop offset="0" stop-color="#fbb012"/><stop offset="0.45" stop-color="#f7a50d"/><stop offset="0.8" stop-color="#e38f09"/><stop offset="1" stop-color="#cc7a07"/></linearGradient>
<linearGradient id="pbb" x1="0" y1="0" x2="1" y2="1"><stop offset="0" stop-color="#d9800a"/><stop offset="0.5" stop-color="#a85c08"/><stop offset="1" stop-color="#5a3006"/></linearGradient>
<linearGradient id="pkb" x1="1" y1="0" x2="0" y2="1"><stop offset="0" stop-color="#e58d0a"/><stop offset="0.5" stop-color="#b96a08"/><stop offset="1" stop-color="#4a2a08"/></linearGradient>
<filter id="blb" x="-10%" y="-10%" width="120%" height="120%"><feGaussianBlur stdDeviation="1.6"/></filter>
<filter id="bwb" x="-10%" y="-10%" width="120%" height="120%"><feGaussianBlur stdDeviation="0.9"/></filter>
<filter id="bsb" x="-10%" y="-10%" width="120%" height="120%"><feGaussianBlur stdDeviation="4"/></filter>
</defs>
<rect width="292" height="193" fill="url(#bgb)"/>
<!-- right top petal -->
<path d="M160 127 C175 121 200 114 221 109.700 C245 105.500 270 103 292 101.500 L292 129.500 C260 132 220 132 175 131.500 Z" fill="url(#prb)"/>
<!-- right back petal -->
<path d="M176 131 C190 132 206 135 236 146.500 C256 154 272 163 283 176 C287 182 289 188 290 193 L262 193 L200 140 Z" fill="url(#pbb)" filter="url(#blb)"/>
<!-- left petal -->
<path d="M0 134.400 C10 131 20 128.500 29 126.700 C40 124 50 122 60 121 C70 120 80 119.800 90 120 C100 120.500 110 122.500 126 123.600 L140 128 L121 131 C112 132.500 106 133.600 80 140.500 C70 143 60 145 50 147 C42 148 36 149 33 151 C26 156 20 161 18 163 C10 169 4 172 0 174 Z" fill="url(#plb)"/>
<!-- dark shadow wedge -->
<path d="M0 174 C6 171 12 167 18 163 C24 157 28 152 33.500 149.800 C42 147.500 52 146 60 145 C68 143.500 74 142 80 140.500 L72 145.500 C62 150 54 154 49 157 C42 162 38 167 36.500 171 C33 178 30 186 29 193 L0 193 Z" fill="#0f1713" filter="url(#bwb)"/>
<!-- back left strip -->
<path d="M80 140.500 C92 137 106 133.600 122 130.500 L130 130 C120 134 112 137 106 139.500 C94 145 84 150 75 155 C64 159 56 162 49 165 C42 170 37 176 33.500 181.500 L30 193 L29 193 C30 186 33 178 36.500 171 C38 167 42 162 49 157 C54 154 62 150 72 145.500 Z" fill="url(#pkb)"/>
<!-- front petal -->
<path d="M29.600 193 C31 188 32 185 33.500 181.500 C37 176 42 170 49 165 C56 162 64 159 75 155 C84 150 94 145 106 139.500 C114 136 122 132.500 130 130 C138 128.500 146 128 152 128.200 C160 128.500 170 130.500 179.500 133 C186 136 192 139 198 142 C206 147 214 153 221 159 C230 164 238 169 244.300 174.500 C252 180 259 187 264.400 193 Z" fill="url(#pfb)"/>
<!-- folds on front petal -->
<g filter="url(#bsb)" opacity="0.5">
<ellipse cx="165" cy="190" rx="24" ry="16" fill="#9a5205"/>
<ellipse cx="226" cy="192" rx="16" ry="12" fill="#9a5205"/>
<ellipse cx="112" cy="194" rx="34" ry="9" fill="#b06406"/>
<ellipse cx="215" cy="160" rx="6" ry="14" transform="rotate(-50 215 160)" fill="#b86a06"/>
</g>
<ellipse cx="150" cy="137" rx="24" ry="6" fill="#fcbd20" opacity="0.55" filter="url(#blb)"/>
<!-- stamen base -->
<path d="M124 125 C130 120 136 117 140 112 L152 110 C156 116 162 121 170 126 C160 131 134 131 124 125 Z" fill="#e7830c"/>
<path d="M132 98 L137 118 M141 100 L143 117 M150 100 L148 117 M158 100 L155 118 M146 96 L146 112" stroke="#141616" stroke-width="4.500" stroke-linecap="round" fill="none"/>
<path d="M135 118 L157 118 L158 123 L133 123 Z" fill="#d9730a"/>
<!-- stamens dark layer -->
<g fill="none" stroke="#d87606" stroke-width="7.600" stroke-linecap="round" stroke-linejoin="round">
<path d="M57 80 C70 88 84 86 96 92 C108 98 122 104 134 106"/>
<path d="M55 87 C66 90 78 89 90 93 C104 98 118 105 132 109"/>
<path d="M71 56 C84 62 96 72 106 82 C116 92 128 98 138 102"/>
<path d="M90.500 45 C104 56 116 72 124 84 C130 92 136 98 140 102"/>
<path d="M94 63 C106 72 116 84 126 92"/>
<path d="M121 38 C126 52 132 70 136 84 C138 92 140 98 142 104"/>
<path d="M143 22.500 C144 40 144 60 145 78 L145 96"/>
<path d="M156 44 C154 60 150 76 148 96"/>
<path d="M168 40 C164 56 158 76 152 96"/>
<path d="M178 34 C174 52 164 76 154 98"/>
<path d="M197.500 34 C190 52 174 78 156 100"/>
<path d="M204.500 36 C196 56 180 82 160 102"/>
<path d="M215 50 C204 66 186 88 164 104"/>
<path d="M220 51 C224 54 224 58 221 62 C210 78 192 94 168 108"/>
<path d="M227 72 C220 82 206 90 194 96 C184 102 174 108 166 111"/>
</g>
<!-- stamens bright layer -->
<g fill="none" stroke="#f89f0c" stroke-width="5" stroke-linecap="round" stroke-linejoin="round">
<path d="M57 79.500 C70 87 84 85 96 91 C108 97 122 103 134 105"/>
<path d="M55 86.500 C66 89.500 78 88.500 90 92.500 C104 97.500 118 104.500 132 108.500"/>
<path d="M71 55.500 C84 61 96 71 106 81 C116 91 128 97 138 101"/>
<path d="M90.500 44.500 C104 55 116 71 124 83 C130 91 136 97 140 101"/>
<path d="M108 54 C114 64 122 78 130 90"/>
<path d="M117 43 C122 56 128 72 134 88"/>
<path d="M121 37.500 C126 52 132 70 136 84 C138 92 140 98 142 103"/>
<path d="M128.500 46 C132 60 136 76 140 92"/>
<path d="M143 22 C144 40 144 60 145 78 L145 95"/>
<path d="M148 30 C148 46 147 64 146 84"/>
<path d="M156 44 C154 60 150 76 148 95"/>
<path d="M168 40 C164 56 158 76 152 95"/>
<path d="M178 33.500 C174 52 164 76 154 97"/>
<path d="M190 41 C184 56 172 78 158 98"/>
<path d="M197.500 33.500 C190 52 174 78 156 99"/>
<path d="M204.500 35.500 C196 56 180 82 160 101"/>
<path d="M215 49.500 C204 66 186 88 164 103"/>
<path d="M220 50.500 C224 54 224 58 221 62 C210 78 192 94 168 107"/>
<path d="M216 71.500 C206 82 190 94 172 104"/>
<path d="M227 71.500 C220 82 206 90 194 96 C184 102 174 108 166 110"/>
</g>
<!-- tips -->
<g fill="#fbb634">
<circle cx="143" cy="23" r="2.200"/><circle cx="148" cy="31" r="2"/><circle cx="121" cy="38.500" r="2.500"/><circle cx="117" cy="44" r="2"/><circle cx="90.500" cy="45.500" r="2.200"/><circle cx="71.500" cy="56.500" r="2.300"/><circle cx="57.500" cy="80" r="2.300"/><circle cx="55.500" cy="87" r="2.200"/><circle cx="168" cy="41" r="2.200"/><circle cx="178" cy="34.500" r="2.200"/><circle cx="197.500" cy="34.500" r="2.300"/><circle cx="204.500" cy="36.500" r="2.200"/><circle cx="215" cy="50.500" r="2.100"/><circle cx="227" cy="72.500" r="2.300"/><circle cx="156" cy="45" r="2"/><circle cx="190" cy="42" r="2"/>
</g>
<!-- highlights -->
<g fill="none" stroke="#fdb51c" stroke-width="2" stroke-linecap="round" opacity="0.9">
<path d="M120 38 C124 50 129 66 133 80"/>
<path d="M142 24 C143 40 143 58 144 76"/>
<path d="M196 36 C190 50 178 70 166 86"/>
<path d="M176 36 C172 52 166 68 160 82"/>
<path d="M72 56 C84 62 94 70 104 80"/>
<path d="M58 80 C70 86 82 86 94 90"/>
</g>
</svg>

<!-- checkboxes + captions -->
<div class="abs" style="left:320px;top:432px;width:14px;height:14px;border-radius:2px;background:#3b8fe8">
  <svg class="abs" style="left:0;top:0" width="14" height="14" viewBox="0 0 14 14"><path d="M3.200 7.300 L5.900 10 L10.700 3.500" stroke="#f4ffff" stroke-width="1.600" fill="none"/></svg>
</div>
<div class="cap" style="left:378px;width:200px;letter-spacing:-0.12px">UXHvTuh730Q - Copy.jpg</div>
<div class="abs" style="left:656px;top:432px;width:14px;height:14px;border-radius:2px;background:#fff;border:1px solid #dcdcdc"></div>
<div class="cap" style="left:714px;width:200px">wed55v.jpg</div>

<!-- FOOTER -->
<div id="foot" class="abs">
  <div class="tx"><b style="left:12px">20</b><span style="left:32px;letter-spacing:0.245px">fichiers sélectionnés.</span><b style="left:155px">31.73 MB</b><span style="left:213px;letter-spacing:0.21px">de l'espace de stockage sera libéré.</span></div>
  <div id="del">Supprimer</div>
</div>
</body>
</html>
